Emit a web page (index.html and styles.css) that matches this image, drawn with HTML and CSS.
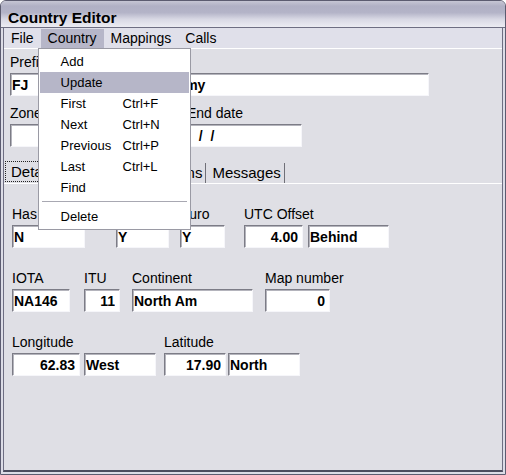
FILE: index.html
```html
<!DOCTYPE html>
<html lang="en">
<head>
    <meta charset="UTF-8">
    <title>Country Editor</title>
    <link rel="stylesheet" href="styles.css">
</head>
<body>

<div class="window">
    <div class="titlebar">Country Editor</div>
    <div class="frame">
        <div class="menubar">
            <div class="menu">File</div>
            <div class="menu open">Country
                <div class="dropdown">
                    <div class="item"><span class="label">Add</span></div>
                    <div class="item hot"><span class="label">Update</span></div>
                    <div class="item"><span class="label">First</span><span>Ctrl+F</span></div>
                    <div class="item"><span class="label">Next</span><span>Ctrl+N</span></div>
                    <div class="item"><span class="label">Previous</span><span>Ctrl+P</span></div>
                    <div class="item"><span class="label">Last</span><span>Ctrl+L</span></div>
                    <div class="item"><span class="label">Find</span></div>
                    <div class="separator"></div>
                    <div class="item"><span class="label">Delete</span></div>
                </div>
            </div>
            <div class="menu">Mappings</div>
            <div class="menu">Calls</div>
        </div>

        <div class="client">
            <div class="row">
                <div class="field">
                    <label>Prefix</label>
                    <input class="edit w-prefix" value="FJ" readonly>
                </div>
                <div class="field f-name">
                    <label>Name</label>
                    <input class="edit w-name" value="Saint Barthelemy" readonly>
                </div>
            </div>
            <div class="row second">
                <div class="field">
                    <label>Zone</label>
                    <input class="edit w-prefix" value="" readonly>
                </div>
                <div class="field f-name">
                    <label>Start date</label>
                    <input class="edit w-start" value="" readonly>
                </div>
                <div class="field f-end">
                    <label>End date</label>
                    <input class="edit date w-end" value="  /  /" readonly>
                </div>
            </div>

            <div class="tabs">
                <div class="tab active"><span class="focus">Details</span></div>
                <div class="tab">Prefixes</div>
                <div class="tab">Exceptions</div>
                <div class="tab">Messages</div>
            </div>

            <div class="panel">
                <div class="prow">
                    <div class="field">
                        <label>Has states</label>
                        <input class="edit w-has" value="N" readonly>
                    </div>
                    <div class="field f-deleted">
                        <label>Deleted</label>
                        <input class="edit w-deleted" value="Y" readonly>
                    </div>
                    <div class="field f-euro">
                        <label>Euro</label>
                        <input class="edit w-euro" value="Y" readonly>
                    </div>
                    <div class="field f-utc">
                        <label>UTC Offset</label>
                        <div class="pair">
                            <input class="edit num w-offset" value="4.00" readonly>
                            <input class="edit w-behind" value="Behind" readonly>
                        </div>
                    </div>
                </div>

                <div class="prow">
                    <div class="field">
                        <label>IOTA</label>
                        <input class="edit w-iota" value="NA146" readonly>
                    </div>
                    <div class="field f-itu">
                        <label>ITU</label>
                        <input class="edit num w-itu" value="11" readonly>
                    </div>
                    <div class="field f-cont">
                        <label>Continent</label>
                        <input class="edit w-cont" value="North Am" readonly>
                    </div>
                    <div class="field f-map">
                        <label>Map number</label>
                        <input class="edit num w-map" value="0" readonly>
                    </div>
                </div>

                <div class="prow">
                    <div class="field">
                        <label>Longitude</label>
                        <div class="pair narrow">
                            <input class="edit num w-long" value="62.83" readonly>
                            <input class="edit w-dir" value="West" readonly>
                        </div>
                    </div>
                    <div class="field f-lat">
                        <label>Latitude</label>
                        <div class="pair tight">
                            <input class="edit num w-lat" value="17.90" readonly>
                            <input class="edit w-dir" value="North" readonly>
                        </div>
                    </div>
                </div>
            </div>
        </div>
    </div>
</div>

</body>
</html>
```

FILE: styles.css
```css
body {
    margin: 0;
    background: #fff;
    font-family: "Liberation Sans", Arial, sans-serif;
    color: #000;
}

/* window chrome */
.window {
    width: 506px;
    height: 475px;
    box-sizing: border-box;
    border: 1px solid #5c5c70;
    border-radius: 6px 6px 0 0;
    background: #dcdce6;
    display: flex;
    flex-direction: column;
    overflow: hidden;
}
.titlebar {
    height: 27px;
    box-sizing: border-box;
    padding: 7px 0 0 7px;
    line-height: 19px;
    font-size: 15.5px;
    font-weight: bold;
    border-bottom: 1px solid #6e6e82;
    background: linear-gradient(to bottom, #c6c6d4 0, #b0b0c4 20%, #b4b4c8 45%, #d8d8e4 70%, #ececf2 100%);
}
.frame {
    flex: 1;
    margin: 0 2px 2px;
    border-left: 1px solid #6e6e82;
    border-right: 1px solid #6e6e82;
    border-bottom: 2px solid #4c4c5e;
    display: flex;
    flex-direction: column;
}

/* menu */
.menubar {
    display: flex;
    height: 20px;
    background: #e0e0ea;
    border-bottom: 1px solid #fff;
    font-size: 14px;
    position: relative;
    z-index: 2;
}
.menu {
    position: relative;
    height: 19px;
    margin-top: 1px;
    line-height: 19px;
    padding: 0 7px;
}
.menu.open {
    background: #b6b6c8;
}
.dropdown {
    position: absolute;
    top: 19px;
    left: -3px;
    width: 153px;
    box-sizing: border-box;
    border: 1px solid #9a9aa4;
    background: #fff;
    padding: 2px 1px;
    font-size: 13px;
}
.item {
    display: flex;
    height: 21px;
    line-height: 21px;
    padding-left: 21px;
}
.item.hot {
    background: #b6b6c8;
}
.item .label {
    width: 62px;
}
.separator {
    height: 1px;
    margin: 3px 2px 4px;
    background: #a8a8b2;
}

/* form */
.client {
    flex: 1;
    display: flex;
    flex-direction: column;
    padding-top: 5px;
    background: #dfdfe5;
}
.row {
    display: flex;
    margin-left: 6px;
}
.row.second {
    margin-top: 9px;
}
.field {
    display: flex;
    flex-direction: column;
}
.field label {
    height: 17px;
    line-height: 17px;
    margin-bottom: 2px;
    font-size: 14px;
    white-space: nowrap;
}
.pair {
    display: flex;
    gap: 5px;
}
.pair.narrow {
    gap: 4px;
}
.pair.tight {
    gap: 2px;
}

.edit {
    box-sizing: border-box;
    height: 23px;
    margin: 0;
    padding: 0 4px 0 1px;
    border: 1px solid;
    border-color: #7c7c86 #f6f6fa #f6f6fa #7c7c86;
    box-shadow: inset 1px 1px 0 #b4b4bc;
    background: #fff;
    font: bold 14px "Liberation Sans", Arial, sans-serif;
    color: #000;
    outline: none;
}
.edit.num {
    text-align: right;
}
.edit.date {
    padding-left: 3px;
}

.f-name { margin-left: 9px; }
.f-end { margin-left: 7px; }
.w-prefix { width: 70px; }
.w-name { width: 340px; }
.w-start { width: 91px; }
.w-end { width: 115px; }

/* tabs */
.tabs {
    display: flex;
    align-items: flex-end;
    height: 23px;
    margin-top: 13px;
    padding-left: 1px;
    font-size: 15px;
}
.tab {
    height: 20px;
    line-height: 20px;
    padding: 0 3px 0 6px;
    border-right: 1px solid #707078;
    white-space: nowrap;
}
.tab.active {
    height: 22px;
    padding: 0;
}
.tab .focus {
    display: block;
    height: 19px;
    line-height: 19px;
    padding: 0 0 0 5px;
    border: 1px dotted #222;
}
.panel {
    flex: 1;
    border-top: 1px solid #fff;
    padding: 22px 0 0 8px;
}
.prow {
    display: flex;
}
.prow + .prow {
    margin-top: 22px;
}

.f-deleted { margin-left: 31px; }
.f-euro { margin-left: 11px; }
.f-utc { margin-left: 19px; }
.f-itu { margin-left: 14px; }
.f-cont { margin-left: 12px; }
.f-map { margin-left: 12px; }
.f-lat { margin-left: 8px; }

.w-has { width: 73px; }
.w-deleted { width: 53px; }
.w-euro { width: 45px; }
.w-offset { width: 59px; }
.w-behind { width: 81px; }
.w-iota { width: 58px; }
.w-itu { width: 36px; }
.w-cont { width: 121px; }
.w-map { width: 65px; }
.w-long { width: 68px; }
.w-lat { width: 62px; }
.w-dir { width: 72px; }
```
